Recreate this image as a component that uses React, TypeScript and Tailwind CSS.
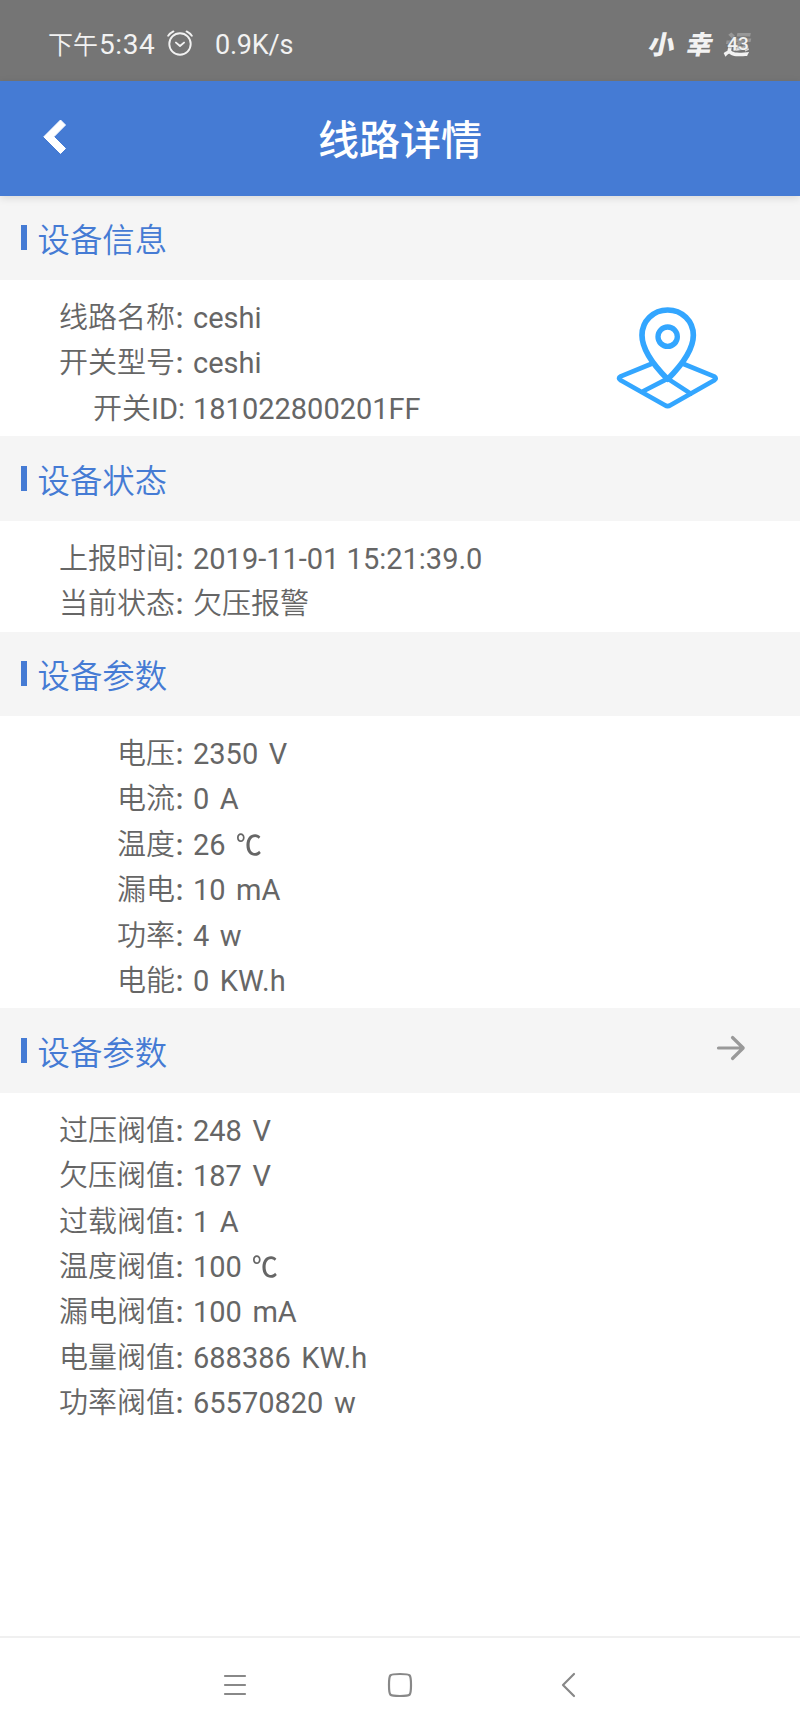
import React from 'react';

interface Row {
  label: string;
  value: string;
  unit?: string;
}

const deviceInfo: Row[] = [
  { label: '线路名称', value: 'ceshi' },
  { label: '开关型号', value: 'ceshi' },
  { label: '开关ID', value: '181022800201FF' },
];

const deviceStatus: Row[] = [
  { label: '上报时间', value: '2019-11-01 15:21:39.0' },
  { label: '当前状态', value: '欠压报警' },
];

const deviceParams: Row[] = [
  { label: '电压', value: '2350', unit: 'V' },
  { label: '电流', value: '0', unit: 'A' },
  { label: '温度', value: '26', unit: '℃' },
  { label: '漏电', value: '10', unit: 'mA' },
  { label: '功率', value: '4', unit: 'w' },
  { label: '电能', value: '0', unit: 'KW.h' },
];

const thresholds: Row[] = [
  { label: '过压阀值', value: '248', unit: 'V' },
  { label: '欠压阀值', value: '187', unit: 'V' },
  { label: '过载阀值', value: '1', unit: 'A' },
  { label: '温度阀值', value: '100', unit: '℃' },
  { label: '漏电阀值', value: '100', unit: 'mA' },
  { label: '电量阀值', value: '688386', unit: 'KW.h' },
  { label: '功率阀值', value: '65570820', unit: 'w' },
];

// Chinese runs use the DemiLight cut, latin runs stay at regular weight
const Mixed: React.FC<{ text: string }> = ({ text }) => (
  <>
    {text.split(/([\u4e00-\u9fff]+)/).filter(Boolean).map((part, i) =>
      /[\u4e00-\u9fff]/.test(part) ? (
        <span key={i} className="font-[350] font-['Noto_Sans_CJK_SC_DemiLight','Noto_Sans_CJK_SC',sans-serif]">{part}</span>
      ) : (
        <span key={i}>{part}</span>
      )
    )}
  </>
);

const StatusBar: React.FC = () => (
  <div className="h-[81px] bg-[#757575] text-[#f2f2f2] flex items-center justify-between pl-[48px] pr-[49px] pt-[8px]">
    <div className="flex items-center whitespace-nowrap leading-none">
      <span className="text-[25px]"><Mixed text="下午" /></span>
      <span className="text-[28px] tracking-[0.6px] ml-[1px] pt-[1px]">5:34</span>
      <svg className="w-[26px] h-[26px] ml-[11.5px] -mt-[3px]" viewBox="0 0 26 26" fill="none" stroke="currentColor" strokeWidth="1.9" strokeLinecap="round" strokeLinejoin="round">
        <circle cx="13" cy="14" r="10.7" />
        <path d="M1.2 5.8Q3.2 3 6.4 1.4M24.8 5.8Q22.8 3 19.6 1.4M9 12.6L13 16L17 12.6" />
      </svg>
      <span className="text-[27px] ml-[22px] pt-[1px] tracking-[-0.2px]">0.9K/s</span>
    </div>
    <div className="flex items-center gap-[12px] text-[26px] font-black leading-none">
      <span className="-skew-x-12">小</span>
      <span className="-skew-x-12">幸</span>
      <span className="relative">
        <span className="block -skew-x-12 bg-linear-to-b from-[#989898] from-55% to-[#f2f2f2] to-55% bg-clip-text text-transparent">运</span>
        <span className="absolute inset-0 -top-[2px] flex items-center justify-center text-[19px] font-medium [text-shadow:0_0_2px_#757575,0_0_2px_#757575]">43</span>
      </span>
    </div>
  </div>
);

const SectionTitle: React.FC<{ title: string; children?: React.ReactNode }> = ({ title, children }) => (
  <div className="h-[84.4px] bg-[#f5f5f5] flex items-center justify-between pl-[20.5px]">
    <div className="flex items-center">
      <div className="w-[6px] h-[25px] bg-[#457bd4]" />
      <h2 className="ml-[11px] pt-[3.5px] text-[32.4px] leading-none text-[#457bd4]"><Mixed text={title} /></h2>
    </div>
    {children}
  </div>
);

const Rows: React.FC<{ rows: Row[] }> = ({ rows }) => (
  <div className="pt-[13px] pb-[7.1px] text-[29px] text-[#666]">
    {rows.map((row) => (
      <div key={row.label} className="flex items-baseline h-[45.4px] leading-[45.4px] whitespace-nowrap">
        <span className="w-[184px] flex items-baseline justify-end">
          <Mixed text={row.label} />
          <span className={/[A-Z]$/.test(row.label) ? '-mr-[1px]' : 'w-[9px] text-center font-medium'}>:</span>
        </span>
        <span className="ml-[9px]"><Mixed text={row.value} /></span>
        {row.unit && (
          <span className={row.unit === '℃' ? 'ml-[10.5px] text-[27px] font-medium origin-left scale-x-[0.95]' : 'ml-[10.5px]'}>{row.unit}</span>
        )}
      </div>
    ))}
  </div>
);

const App: React.FC = () => {
  return (
    <div className="w-[800px] h-[1733px] flex flex-col bg-white overflow-hidden font-['Roboto','Noto_Sans_CJK_SC',sans-serif]">
      <StatusBar />

      {/* Header */}
      <header className="relative z-10 h-[114.7px] bg-[#457bd4] text-white grid grid-cols-3 items-center shadow-[0_2px_8px_rgba(0,0,0,0.12)]">
        <svg className="w-[24px] h-[36px] ml-[43px] -mt-[2px]" viewBox="0 0 24 36" fill="currentColor">
          <path d="M17.5 1L22.5 6L10.8 17.8L22.5 29.5L17.5 34.5L.8 17.8Z" stroke="currentColor" strokeLinejoin="round" />
        </svg>
        <h1 className="text-center text-[41px] leading-none font-medium pt-[6px]">线路详情</h1>
      </header>

      <SectionTitle title="设备信息" />
      <div className="flex justify-between">
        <Rows rows={deviceInfo} />
        <svg className="w-[105px] h-[107px] mt-[25px] mr-[80px]" viewBox="75 75 315 321" fill="none" stroke="#33a6ff" strokeLinecap="round" strokeLinejoin="round">
          <path d="M233 298C211 276 156 217 156 166C156 123 190 90 233 90S310 123 310 166C310 217 255 276 233 298Z" strokeWidth="17" />
          <circle cx="233" cy="170" r="29" strokeWidth="16" />
          <path d="M183 252L92 289Q82 294 92 301L225 376Q233 381 241 376L373 301Q382 295 372 289L281 252M155 336L233 296L302 341" strokeWidth="14" />
        </svg>
      </div>

      <SectionTitle title="设备状态" />
      <Rows rows={deviceStatus} />

      <SectionTitle title="设备参数" />
      <Rows rows={deviceParams} />

      <SectionTitle title="设备参数">
        <svg className="w-[30px] h-[26px] mr-[54px] -mt-[6px]" viewBox="0 0 30 26" fill="none" stroke="#999" strokeWidth="3.2" strokeLinecap="round" strokeLinejoin="round">
          <path d="M2.5 13H27M16.5 2.5L27.2 13L16.5 23.5" />
        </svg>
      </SectionTitle>
      <Rows rows={thresholds} />

      {/* System navigation */}
      <nav className="mt-auto h-[97px] pb-[2px] border-t-2 border-[#f0f0f0] text-[#888] flex items-center">
        <svg className="w-[24px] h-[24px] ml-[223px]" viewBox="0 0 24 24" fill="none" stroke="currentColor" strokeWidth="2.2" strokeLinecap="round">
          <path d="M2 3H22M2 12H22M2 21H22" />
        </svg>
        <svg className="w-[26px] h-[26px] ml-[140px]" viewBox="0 0 26 26" fill="none" stroke="currentColor" strokeWidth="2.2">
          <path d="M13 2C20 2 21.5 2.3 22.6 3.4C23.7 4.5 24 6 24 13S23.7 21.5 22.6 22.6C21.5 23.7 20 24 13 24S4.5 23.7 3.4 22.6C2.3 21.5 2 20 2 13S2.3 4.5 3.4 3.4C4.5 2.3 6 2 13 2Z" />
        </svg>
        <svg className="w-[16px] h-[26px] ml-[146.5px]" viewBox="0 0 16 26" fill="none" stroke="currentColor" strokeWidth="2.2" strokeLinecap="round" strokeLinejoin="round">
          <path d="M14 2L3 13L14 24" />
        </svg>
      </nav>
    </div>
  );
};

export default App;
